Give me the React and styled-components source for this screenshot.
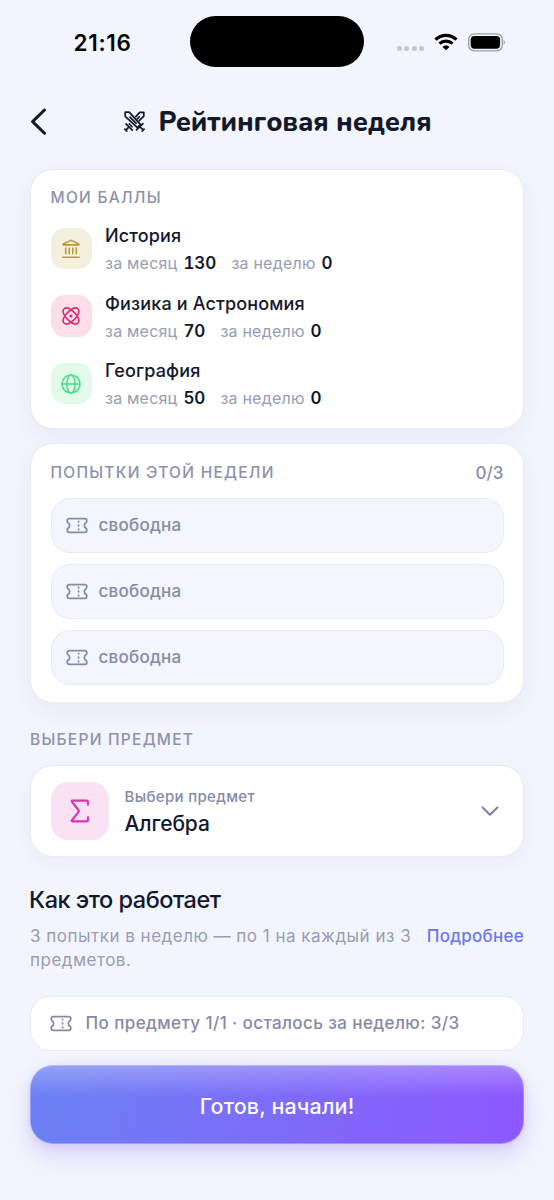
import React from 'react';
import styled, { createGlobalStyle } from 'styled-components';

const GlobalStyle = createGlobalStyle`
  *, *::before, *::after { box-sizing: border-box; }
  body {
    margin: 0;
    background: #f2f5fd;
    color: #14182c;
    font-family: Inter, "Liberation Sans", sans-serif;
    -webkit-font-smoothing: antialiased;
  }
  button { font-family: inherit; border: 0; padding: 0; background: none; color: inherit; cursor: pointer; }
  svg { display: block; flex: none; }
`;

const Screen = styled.div`
  width: 554px;
  height: 1200px;
  overflow: hidden;
  display: flex;
  flex-direction: column;
`;

const StatusBar = styled.div`
  display: grid;
  grid-template-columns: 190px 174px 190px;
  height: 84px;
  padding-top: 16px;
  align-items: start;
`;

const Clock = styled.div`
  padding-left: 73.5px;
  font-size: 22.5px;
  font-weight: 600;
  letter-spacing: 0.7px;
  line-height: 53px;
  color: #050507;
  white-space: nowrap;
`;

const Island = styled.div`
  height: 51px;
  border-radius: 26px;
  background: #000;
`;

const Indicators = styled.div`
  display: flex;
  align-items: center;
  height: 51px;
  padding-left: 33px;
`;

const CellDots = styled.div`
  display: flex;
  gap: 2.4px;
  padding-top: 13px;
  margin-right: 10px;
`;

const CellDot = styled.span`
  width: 5px;
  height: 5px;
  border-radius: 2px;
  background: #c6c7d1;
`;

const BatteryWrap = styled.div`
  margin-left: 10px;
  padding-top: 1px;
`;

const Header = styled.header`
  display: flex;
  align-items: center;
  height: 76px;
  padding: 0 30px;
`;

const BackButton = styled.button`
  width: 40px;
  height: 44px;
  display: flex;
  align-items: center;
`;

const Title = styled.h1`
  flex: 1;
  margin: 0 40px 0 0;
  padding: 2px 0 0 1px;
  display: flex;
  align-items: center;
  justify-content: center;
  gap: 12px;
  font-family: Nunito, "Noto Sans", sans-serif;
  font-weight: 800;
  font-size: 27px;
  line-height: 36px;
  letter-spacing: -0.12px;
  white-space: nowrap;

  svg { margin-bottom: 4px; }
`;

const Content = styled.main`
  padding: 9px 30px 0;
  display: flex;
  flex-direction: column;
`;

const Card = styled.section`
  background: #fff;
  border: 1px solid #e9ebf5;
  border-radius: 23px;
  box-shadow: 0 8px 22px rgba(60, 60, 120, 0.055);
`;

const ScoresCard = styled(Card)`
  height: 260px;
  padding: 17px 19.5px 0;
`;

const AttemptsCard = styled(Card)`
  height: 260px;
  margin-top: 14px;
  padding: 18px 19.5px 0;
`;

const Caption = styled.h2`
  margin: 0;
  font-size: 15.5px;
  font-weight: 500;
  line-height: 22px;
  letter-spacing: 1.26px;
  color: #8d91ac;
  white-space: nowrap;
`;

const ScoreList = styled.div`
  display: flex;
  flex-direction: column;
  gap: 19.5px;
  padding-top: 15.5px;
`;

const ScoreRow = styled.div`
  display: flex;
  align-items: center;
  gap: 13px;
  height: 48px;
`;

const ScoreText = styled.div`
  padding-top: 3px;
`;

const IconTile = styled.div`
  display: flex;
  align-items: center;
  justify-content: center;
  flex: none;
  width: ${(p) => p.$size}px;
  height: ${(p) => p.$size}px;
  border-radius: ${(p) => p.$radius}px;
  background: ${(p) => p.$bg};
  color: ${(p) => p.$fg};
`;

const SubjectName = styled.div`
  font-size: 18px;
  font-weight: 500;
  line-height: 24px;
  letter-spacing: 0.15px;
  white-space: nowrap;
`;

const Stats = styled.div`
  display: flex;
  gap: 15px;
  margin-top: 3px;
  line-height: 25px;
`;

const Stat = styled.div`
  display: flex;
  align-items: baseline;
  gap: 6px;
  font-size: 16px;
  letter-spacing: 0.22px;
  color: #989cb4;
  white-space: nowrap;

  b {
    font-size: 17px;
    font-weight: 600;
    letter-spacing: 0;
    font-variant-numeric: tabular-nums;
    color: #14182c;
  }
`;

const CardHeading = styled.div`
  display: flex;
  justify-content: space-between;
  align-items: center;
`;

const Counter = styled.span`
  font-size: 17px;
  font-weight: 500;
  line-height: 22px;
  color: #8a8eaa;
`;

const SlotList = styled.div`
  display: flex;
  flex-direction: column;
  gap: 11px;
  padding-top: 14px;
`;

const Slot = styled.div`
  display: flex;
  align-items: center;
  gap: 11px;
  height: 55px;
  padding: 0 14px 1px;
  border: 1px solid #e8ebf4;
  border-radius: 19px;
  background: #f3f6fe;
  color: #858aa7;
  font-size: 17px;
  font-weight: 500;
  letter-spacing: 0.25px;
`;

const SectionLabel = styled.div`
  padding: 26px 0 14px;
`;

const SubjectSelect = styled(Card).attrs({ as: 'button' })`
  display: flex;
  align-items: center;
  width: 100%;
  height: 92px;
  padding: 0 22px 0 19.5px;
  gap: 16px;
  text-align: left;
  background: #fff;
  border: 1px solid #e9ebf5;
  color: #14182c;
  box-shadow: 0 6px 18px rgba(60, 60, 120, 0.04);
`;

const SelectText = styled.span`
  flex: 1;
  display: flex;
  flex-direction: column;
  padding-top: 2px;
  white-space: nowrap;
`;

const SelectHint = styled.span`
  font-size: 15px;
  font-weight: 500;
  line-height: 20px;
  letter-spacing: 0.34px;
  color: #858aa6;
`;

const SelectValue = styled.span`
  margin-top: 3px;
  font-size: 21px;
  font-weight: 500;
  line-height: 28px;
  letter-spacing: -0.12px;
`;

const HowTitle = styled.h2`
  margin: 27px 0 0 -1px;
  font-size: 23.5px;
  font-weight: 500;
  line-height: 32px;
  letter-spacing: -0.5px;
`;

const HowRow = styled.div`
  display: flex;
  justify-content: space-between;
  margin-top: 9px;
  font-size: 17px;
  line-height: 23.5px;
  white-space: nowrap;
`;

const HowText = styled.p`
  margin: 0;
  color: #989cb4;
  letter-spacing: 0.5px;
`;

const MoreLink = styled.button`
  align-self: flex-start;
  color: #6b78f0;
  font-size: 17px;
  font-weight: 500;
  line-height: 23.5px;
  letter-spacing: 0.25px;
`;

const LimitCard = styled(Card)`
  display: flex;
  align-items: center;
  gap: 13.5px;
  height: 55px;
  margin-top: 24px;
  padding: 0 19px 1px;
  border-radius: 20px;
  color: #858aa6;
  font-size: 17px;
  font-weight: 500;
  letter-spacing: 0.41px;
  white-space: nowrap;
  box-shadow: none;
`;

const StartButton = styled.button`
  height: 79px;
  margin-top: 14px;
  padding-top: 2px;
  border: 1px solid rgba(255, 255, 255, 0.28);
  border-radius: 23px;
  background:
    linear-gradient(180deg, rgba(255, 255, 255, 0.27) 0%, rgba(255, 255, 255, 0) 40%) border-box,
    linear-gradient(100deg, #6b80f4 3%, #7d6cf9 50%, #8c58ff 97%) border-box;
  box-shadow: 0 12px 24px rgba(125, 80, 235, 0.2), 0 2px 10px rgba(125, 80, 235, 0.12);
  color: #fbfaff;
  font-size: 21.5px;
  font-weight: 500;
  letter-spacing: 0.12px;
`;

const stroke = {
  fill: 'none',
  stroke: 'currentColor',
  strokeLinecap: 'round',
  strokeLinejoin: 'round',
};

const TicketIcon = () => (
  <svg width="22" height="17" viewBox="0 0 22 17" {...stroke} strokeWidth="1.8">
    <path d="M3.2 1.7H18.8Q20.7 1.7 20.7 3.3V4.6Q20.7 5.3 20 5.7A3.2 3.2 0 0 0 20 11.3Q20.7 11.7 20.7 12.4V13.7Q20.7 15.3 18.8 15.3H3.2Q1.3 15.3 1.3 13.7V12.4Q1.3 11.7 2 11.3A3.2 3.2 0 0 0 2 5.7Q1.3 5.3 1.3 4.6V3.3Q1.3 1.7 3.2 1.7Z" />
    <path d="M12.6 4.3v.5M12.6 8.2v.6M12.6 12.2v.5" />
  </svg>
);

const SwordsIcon = () => (
  <svg width="23" height="23" viewBox="0 0 24 24" {...stroke} strokeWidth="1.8">
    <path d="M2.3 2.3h4.2l11.8 12.9-3.3 3.2L2.3 6.6z" />
    <path d="M7.3 7.4l6.4 6.6" />
    <path d="M13.4 6.9L17.5 2.4H21.7V6.5L17 11.2M17 7.1l-2.2 2.3" />
    <path d="M20.8 14.2l-6.7 6.5M17.7 17.6l3.3 3.2M20 22l2-2" />
    <path d="M3.1 14.6l6.6 6.4M6.3 17.7l-3.3 3.2M1.9 19.9l2.1 2.1M6.6 14.6l2.8 2.9" />
  </svg>
);

const BankIcon = () => (
  <svg width="20" height="20" viewBox="0 0 20 20" {...stroke} strokeWidth="1.6">
    <path d="M9.2 1.6Q10 1.2 10.8 1.6L17.8 5V5.9H2.2V5Z" />
    <path d="M4.7 9v5.8M8.2 9v5.8M11.8 9v5.8M15.3 9v5.8M1.8 18.2H18.2" />
  </svg>
);

const AtomIcon = () => (
  <svg width="20" height="20" viewBox="0 0 20 20" {...stroke} strokeWidth="1.6">
    <path d="M3 3C5.2 .8 9.7 3 13.4 6.6S19.2 14.8 17 17S10.3 17 6.6 13.4S.8 5.2 3 3Z" />
    <path d="M17 3C14.8 .8 10.3 3 6.6 6.6S.8 14.8 3 17S9.7 17 13.4 13.4S19.2 5.2 17 3Z" />
    <circle cx="10" cy="10" r="0.8" fill="currentColor" />
  </svg>
);

const GlobeIcon = () => (
  <svg width="20" height="20" viewBox="0 0 20 20" {...stroke} strokeWidth="1.5">
    <circle cx="10" cy="10" r="9" />
    <ellipse cx="10" cy="10" rx="4.1" ry="9" />
    <path d="M1 10h18" />
  </svg>
);

const SigmaIcon = () => (
  <svg width="20" height="24" viewBox="0 0 20 24" {...stroke} strokeWidth="2.2">
    <path d="M18 5.6V3.2Q18 1.7 16.5 1.7H2.2Q1.4 1.7 1.8 2.5L8.6 11.2Q9.2 12 8.6 12.8L1.8 21.5Q1.4 22.3 2.2 22.3H16.5Q18 22.3 18 20.8V18.4" />
  </svg>
);

const ChevronLeft = () => (
  <svg width="17" height="28" viewBox="0 0 17 28" {...stroke} strokeWidth="3">
    <path d="M14.5 2L2.6 13.6L14.5 25.2" />
  </svg>
);

const ChevronDown = () => (
  <svg width="22" height="22" viewBox="0 0 22 22" {...stroke} strokeWidth="2.1" color="#7c81a0">
    <path d="M3.6 7.4L11 14.7L18.4 7.4" />
  </svg>
);

const WifiIcon = () => (
  <svg width="24" height="18" viewBox="0 0 24 18" fill="none" stroke="#000" strokeWidth="3.2">
    <path d="M1.5 6.6C7.3 .9 16.7 .9 22.5 6.6" />
    <path d="M5.5 10.7C9.1 7.3 14.9 7.3 18.5 10.7" />
    <path d="M8.6 13.9C10.5 12.1 13.5 12.1 15.4 13.9L12 17.3Z" fill="#000" stroke="none" />
  </svg>
);

const BatteryIcon = () => (
  <svg width="39" height="19" viewBox="0 0 39 19">
    <rect x="0.7" y="0.9" width="33.6" height="16.9" rx="5.4" fill="none" stroke="#9b9ca4" strokeWidth="1.3" />
    <rect x="2.7" y="2.9" width="29.4" height="12.9" rx="3.7" fill="#000" />
    <path d="M35.6 6.7Q38.2 9.3 35.6 12Z" fill="#9b9ca4" />
  </svg>
);

const subjects = [
  { name: 'История', month: 130, week: 0, icon: <BankIcon />, bg: '#f4f0df', fg: '#b99c34' },
  { name: 'Физика и Астрономия', month: 70, week: 0, icon: <AtomIcon />, bg: '#fadfe9', fg: '#da2c70' },
  { name: 'География', month: 50, week: 0, icon: <GlobeIcon />, bg: '#e1faea', fg: '#4cda83' },
];

export default function App() {
  return (
    <Screen>
      <GlobalStyle />
      <StatusBar>
        <Clock>21:16</Clock>
        <Island />
        <Indicators>
          <CellDots>
            <CellDot /><CellDot /><CellDot /><CellDot />
          </CellDots>
          <WifiIcon />
          <BatteryWrap><BatteryIcon /></BatteryWrap>
        </Indicators>
      </StatusBar>
      <Header>
        <BackButton aria-label="Назад"><ChevronLeft /></BackButton>
        <Title><SwordsIcon />Рейтинговая неделя</Title>
      </Header>
      <Content>
        <ScoresCard>
          <Caption>МОИ БАЛЛЫ</Caption>
          <ScoreList>
            {subjects.map((s) => (
              <ScoreRow key={s.name}>
                <IconTile $size={41.5} $radius={14} $bg={s.bg} $fg={s.fg}>{s.icon}</IconTile>
                <ScoreText>
                  <SubjectName>{s.name}</SubjectName>
                  <Stats>
                    <Stat>за месяц <b>{s.month}</b></Stat>
                    <Stat>за неделю <b>{s.week}</b></Stat>
                  </Stats>
                </ScoreText>
              </ScoreRow>
            ))}
          </ScoreList>
        </ScoresCard>
        <AttemptsCard>
          <CardHeading>
            <Caption>ПОПЫТКИ ЭТОЙ НЕДЕЛИ</Caption>
            <Counter>0/3</Counter>
          </CardHeading>
          <SlotList>
            {[1, 2, 3].map((n) => (
              <Slot key={n}><TicketIcon />свободна</Slot>
            ))}
          </SlotList>
        </AttemptsCard>
        <SectionLabel><Caption>ВЫБЕРИ ПРЕДМЕТ</Caption></SectionLabel>
        <SubjectSelect>
          <IconTile $size={58} $radius={17} $bg="#fae2f4" $fg="#d636b8"><SigmaIcon /></IconTile>
          <SelectText>
            <SelectHint>Выбери предмет</SelectHint>
            <SelectValue>Алгебра</SelectValue>
          </SelectText>
          <ChevronDown />
        </SubjectSelect>
        <HowTitle>Как это работает</HowTitle>
        <HowRow>
          <HowText>3 попытки в неделю — по 1 на каждый из 3<br />предметов.</HowText>
          <MoreLink>Подробнее</MoreLink>
        </HowRow>
        <LimitCard><TicketIcon />По предмету 1/1 · осталось за неделю: 3/3</LimitCard>
        <StartButton>Готов, начали!</StartButton>
      </Content>
    </Screen>
  );
}
